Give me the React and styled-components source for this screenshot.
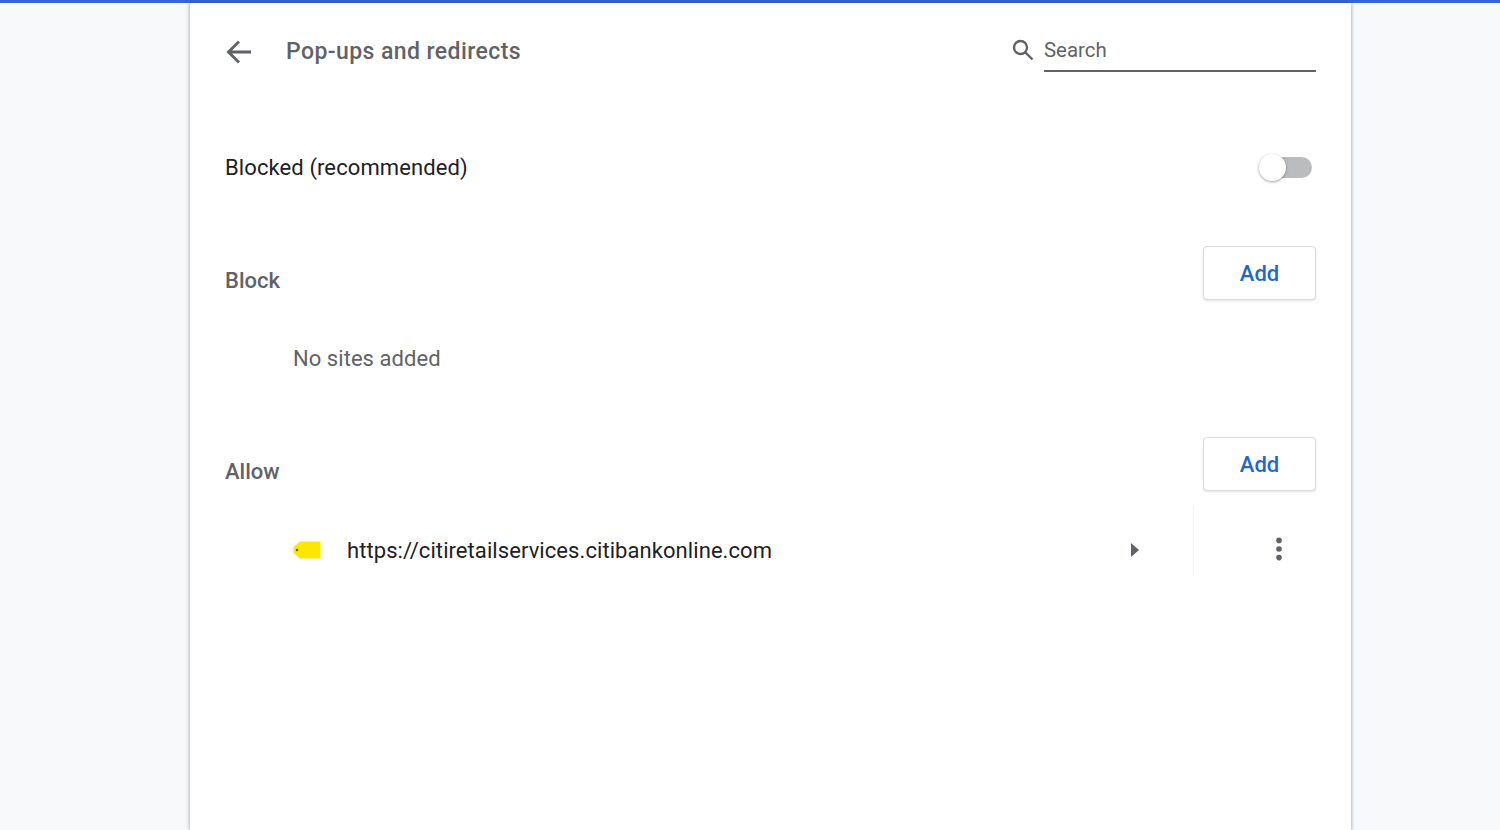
import React from "react";
import styled, { createGlobalStyle } from "styled-components";

const GlobalStyle = createGlobalStyle`
  html, body {
    margin: 0;
    height: 100%;
    overflow: hidden;
    background: #f8f9fa;
    font-family: Roboto, "Liberation Sans", sans-serif;
  }
`;

const Page = styled.div`
  height: 830px;
  display: flex;
  flex-direction: column;
`;

const TopBar = styled.div`
  height: 3px;
  flex: none;
  background: #3367d6;
`;

const Card = styled.main`
  flex: 1;
  width: 1161px;
  margin-left: 190px;
  box-sizing: border-box;
  padding: 0 35px;
  background: #fff;
  box-shadow: 0 0 4px rgba(60, 64, 67, 0.55);
`;

const Header = styled.header`
  height: 97px;
  display: flex;
  align-items: center;
  box-sizing: border-box;
  padding-top: 1px;
`;

const BackButton = styled.button`
  width: 61px;
  height: 30px;
  padding: 0;
  border: 0;
  background: none;
  display: flex;
  align-items: center;
  color: #5f6368;
`;

const Title = styled.h1`
  margin: 0;
  flex: 1;
  font-size: 23px;
  font-weight: 500;
  letter-spacing: 0.42px;
  color: #5f6368;
  line-height: 30px;
`;

const SearchBox = styled.div`
  display: flex;
  align-items: flex-start;
  gap: 9px;
  color: #5f6368;
`;

const SearchField = styled.div`
  width: 272px;
  height: 40px;
  box-sizing: border-box;
  padding-top: 4px;
  border-bottom: 2px solid #5f6368;
  font-size: 20.4px;
  line-height: 28px;
`;

const SearchIcon = styled.svg`
  margin-top: 6px;
`;

const SettingRow = styled.div`
  height: 142px;
  display: flex;
  align-items: center;
  justify-content: space-between;
  padding-bottom: 7px;
  box-sizing: border-box;
`;

const SettingLabel = styled.span`
  font-size: 22px;
  letter-spacing: 0.1px;
  color: #202124;
`;

const Toggle = styled.div`
  position: relative;
  width: 40px;
  height: 21px;
  margin-right: 4px;
  border-radius: 11px;
  background: #bbbcbe;
`;

const ToggleKnob = styled.span`
  position: absolute;
  left: -13px;
  top: -3px;
  width: 27px;
  height: 27px;
  border-radius: 50%;
  background: #fff;
  box-shadow: 0 1px 3px rgba(60, 64, 67, 0.5);
`;

const SectionHeader = styled.div`
  height: 54px;
  display: flex;
  align-items: flex-end;
  justify-content: space-between;
`;

const SectionTitle = styled.h2`
  margin: 0 0 4px;
  font-size: 22px;
  font-weight: 500;
  color: #5f6368;
  line-height: 30px;
`;

const AddButton = styled.button`
  width: 113px;
  height: 54px;
  padding: 0;
  background: #fff;
  border: 1px solid #dadce0;
  border-radius: 4px;
  box-shadow: 0 1px 2px rgba(60, 64, 67, 0.15);
  font-family: inherit;
  font-size: 22px;
  font-weight: 500;
  color: #2168c8;
`;

const BlockSection = styled.section`
  padding: 4px 0 64px;
`;

const EmptyText = styled.p`
  margin: 45px 0 0 68px;
  font-size: 22px;
  letter-spacing: 0.05px;
  line-height: 28px;
  color: #5f6368;
`;

const SiteRow = styled.div`
  height: 72px;
  margin-top: 23px;
  padding-left: 68px;
  display: flex;
  align-items: center;
`;

const SiteTag = styled.svg`
  flex: none;
  margin-right: 26px;
`;

const SiteUrl = styled.span`
  flex: 1;
  font-size: 22px;
  letter-spacing: 0.07px;
  color: #202124;
`;

const Caret = styled.svg`
  flex: none;
  margin-right: 54px;
`;

const MenuCell = styled.div`
  width: 123px;
  height: 71px;
  flex: none;
  align-self: flex-start;
  margin-top: -9px;
  display: flex;
  align-items: center;
  justify-content: center;
  box-sizing: border-box;
  padding: 17px 0 0 49px;
  border-left: 1px solid #f1f2f3;
  color: #5f6368;
`;

const DotsIcon = styled.svg`
  margin-right: 1px;
`;

export default function App() {
  return (
    <>
      <GlobalStyle />
      <Page>
        <TopBar />
        <Card>
          <Header>
            <BackButton aria-label="Back">
              <svg width="28" height="28" viewBox="0 0 28 28" fill="none" stroke="currentColor" strokeWidth="2.9">
                <path d="M26 14H4M14 3.5 3.5 14 14 24.5" />
              </svg>
            </BackButton>
            <Title>Pop-ups and redirects</Title>
            <SearchBox>
              <SearchIcon width="24" height="24" viewBox="0 0 24 24" fill="none" stroke="currentColor" strokeWidth="2.4">
                <circle cx="9.5" cy="9.5" r="6.5" />
                <path d="m14.5 14.5 7 7" />
              </SearchIcon>
              <SearchField>Search</SearchField>
            </SearchBox>
          </Header>

          <SettingRow>
            <SettingLabel>Blocked (recommended)</SettingLabel>
            <Toggle>
              <ToggleKnob />
            </Toggle>
          </SettingRow>

          <BlockSection>
            <SectionHeader>
              <SectionTitle>Block</SectionTitle>
              <AddButton>Add</AddButton>
            </SectionHeader>
            <EmptyText>No sites added</EmptyText>
          </BlockSection>

          <section>
            <SectionHeader>
              <SectionTitle>Allow</SectionTitle>
              <AddButton>Add</AddButton>
            </SectionHeader>
            <SiteRow>
              <SiteTag width="28" height="18" viewBox="0 0 28 18">
                <path d="M7 0.5H27.5V17.5H7L0.5 12V6Z" fill="#ffe600" />
                <circle cx="4" cy="9" r="1.2" fill="#5a5a20" />
              </SiteTag>
              <SiteUrl>https://citiretailservices.citibankonline.com</SiteUrl>
              <Caret width="8" height="14" viewBox="0 0 8 14">
                <path d="M0 0 8 7 0 14Z" fill="#5f6368" />
              </Caret>
              <MenuCell>
                <DotsIcon width="6" height="24" viewBox="0 0 6 24" fill="currentColor">
                  <circle cx="3" cy="3.4" r="2.8" />
                  <circle cx="3" cy="12" r="2.8" />
                  <circle cx="3" cy="20.6" r="2.8" />
                </DotsIcon>
              </MenuCell>
            </SiteRow>
          </section>
        </Card>
      </Page>
    </>
  );
}
